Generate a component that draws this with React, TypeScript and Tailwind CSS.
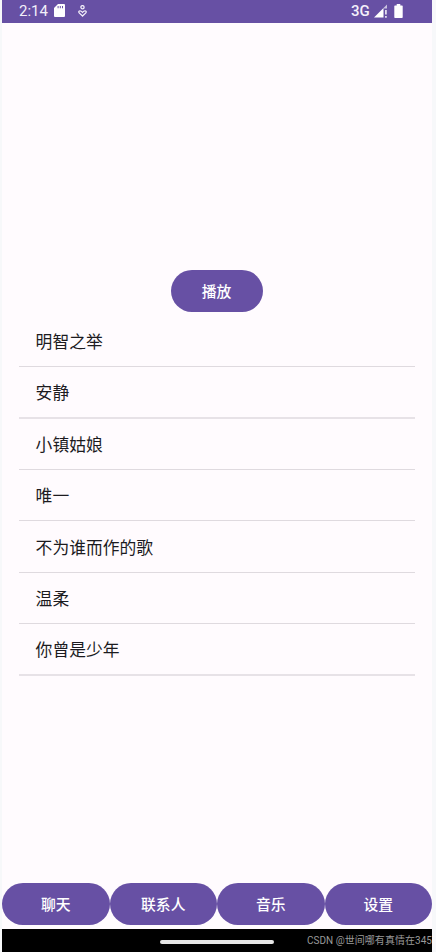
const songs = [
  { title: '明智之举', row: 'h-[51px] border-b border-[#dfdadf]' },
  { title: '安静', row: 'h-[52px] border-b-2 border-[#e7e2e7]' },
  { title: '小镇姑娘', row: 'h-[51px] border-b border-[#dfdadf]' },
  { title: '唯一', row: 'h-[51px] border-b border-[#dfdadf]' },
  { title: '不为谁而作的歌', row: 'h-[52px] border-b border-[#dfdadf]' },
  { title: '温柔', row: 'h-[51px] border-b border-[#dfdadf]' },
  { title: '你曾是少年', row: 'h-[52px] border-b-2 border-[#e7e2e7]' },
];

const tabs = ['聊天', '联系人', '音乐', '设置'];

function StatusBar() {
  return (
    <header className="flex h-[23px] shrink-0 items-center bg-[#6750a4] pl-[17px] pr-[29px] text-[#f3effa]">
      <span className="-mt-[2px] w-[35px] whitespace-nowrap text-[15px] leading-5">2:14</span>
      <svg className="-mt-[2px] h-[13px] w-[11px]" viewBox="0 0 11 13">
        <path fill="white" fillRule="evenodd" d="M4 0H10Q11 0 11 1V12Q11 13 10 13H1Q0 13 0 12V4ZM3.6 2V4.3H4.6V2ZM5.8 2V4.3H6.8V2ZM8 2V4.3H9V2Z" />
      </svg>
      <svg className="ml-[13px] -mt-[1px] h-[12px] w-[9px]" viewBox="0 0 9 12" fill="none" stroke="currentColor" strokeWidth="1.3">
        <circle cx="4.5" cy="2.2" r="1.6" />
        <path d="M4.5 11L1.4 8.1C-.3 6.4 1.9 4.4 4.5 7.4C7.1 4.4 9.3 6.4 7.6 8.1Z" />
      </svg>
      <div className="ml-auto flex items-center">
        <span className="-mt-[2px] w-[23px] whitespace-nowrap text-[15px] font-medium leading-5">3G</span>
        <svg className="-mt-[1px] h-[14px] w-[14px]" viewBox="0 0 14 14">
          <path fill="white" d="M0 13.5L9.5 4V13.5Z" />
          <path fill="white" fillOpacity=".65" d="M9.5 4L13 .5V4.5H9.5Z" />
          <path fill="white" fillOpacity=".8" d="M11 6H12.8V10.5H11ZM11 12H12.8V13.8H11Z" />
        </svg>
        <svg className="ml-[6px] -mt-[2px] h-[14px] w-[9px]" viewBox="0 0 9 14">
          <path fill="white" d="M2.7 0H6.3V1.4H8Q8.7 1.4 8.7 2.1V13.2Q8.7 14 8 14H1Q.3 14 .3 13.2V2.1Q.3 1.4 1 1.4H2.7Z" />
        </svg>
      </div>
    </header>
  );
}

export default function App() {
  return (
    <div className="h-[952px] w-[436px] overflow-hidden bg-[#f7f8fa] pl-[2px] pr-1 font-[Roboto,'Noto_Sans_CJK_SC',sans-serif]">
      <div className="flex h-full flex-col bg-[#fffbfe]">
        <StatusBar />
        <main className="flex flex-1 flex-col pt-[247px]">
          <button className="ml-[169px] h-[42px] w-[92px] rounded-full bg-[#6750a4] pr-px pt-[2px] text-[14.8px] font-medium text-white">播放</button>
          <ul className="ml-[17px] mr-[17px] mt-[4px]">
            {songs.map(({ title, row }) => (
              <li key={title} className={`flex items-center pl-[16.6px] pt-[2px] text-[16.8px] leading-6 text-[#1c1b1f] ${row}`}>
                {title}
              </li>
            ))}
          </ul>
          <nav className="mt-auto mb-1 grid grid-cols-4">
            {tabs.map((tab) => (
              <button key={tab} className="h-[42px] rounded-full bg-[#6750a4] pt-[2px] text-[14.8px] font-medium text-white">
                {tab}
              </button>
            ))}
          </nav>
        </main>
        <footer className="flex h-[23px] shrink-0 items-center justify-end bg-black">
          <div className="mt-[3px] h-[4px] w-[114px] shrink-0 rounded-full bg-[#e6e6e6]" />
          <span className="ml-[32px] w-[126px] shrink-0 whitespace-nowrap text-right text-[10px] leading-5 tracking-[0.04px] text-[#999999]">
            CSDN @世间哪有真情在345
          </span>
        </footer>
      </div>
    </div>
  );
}
